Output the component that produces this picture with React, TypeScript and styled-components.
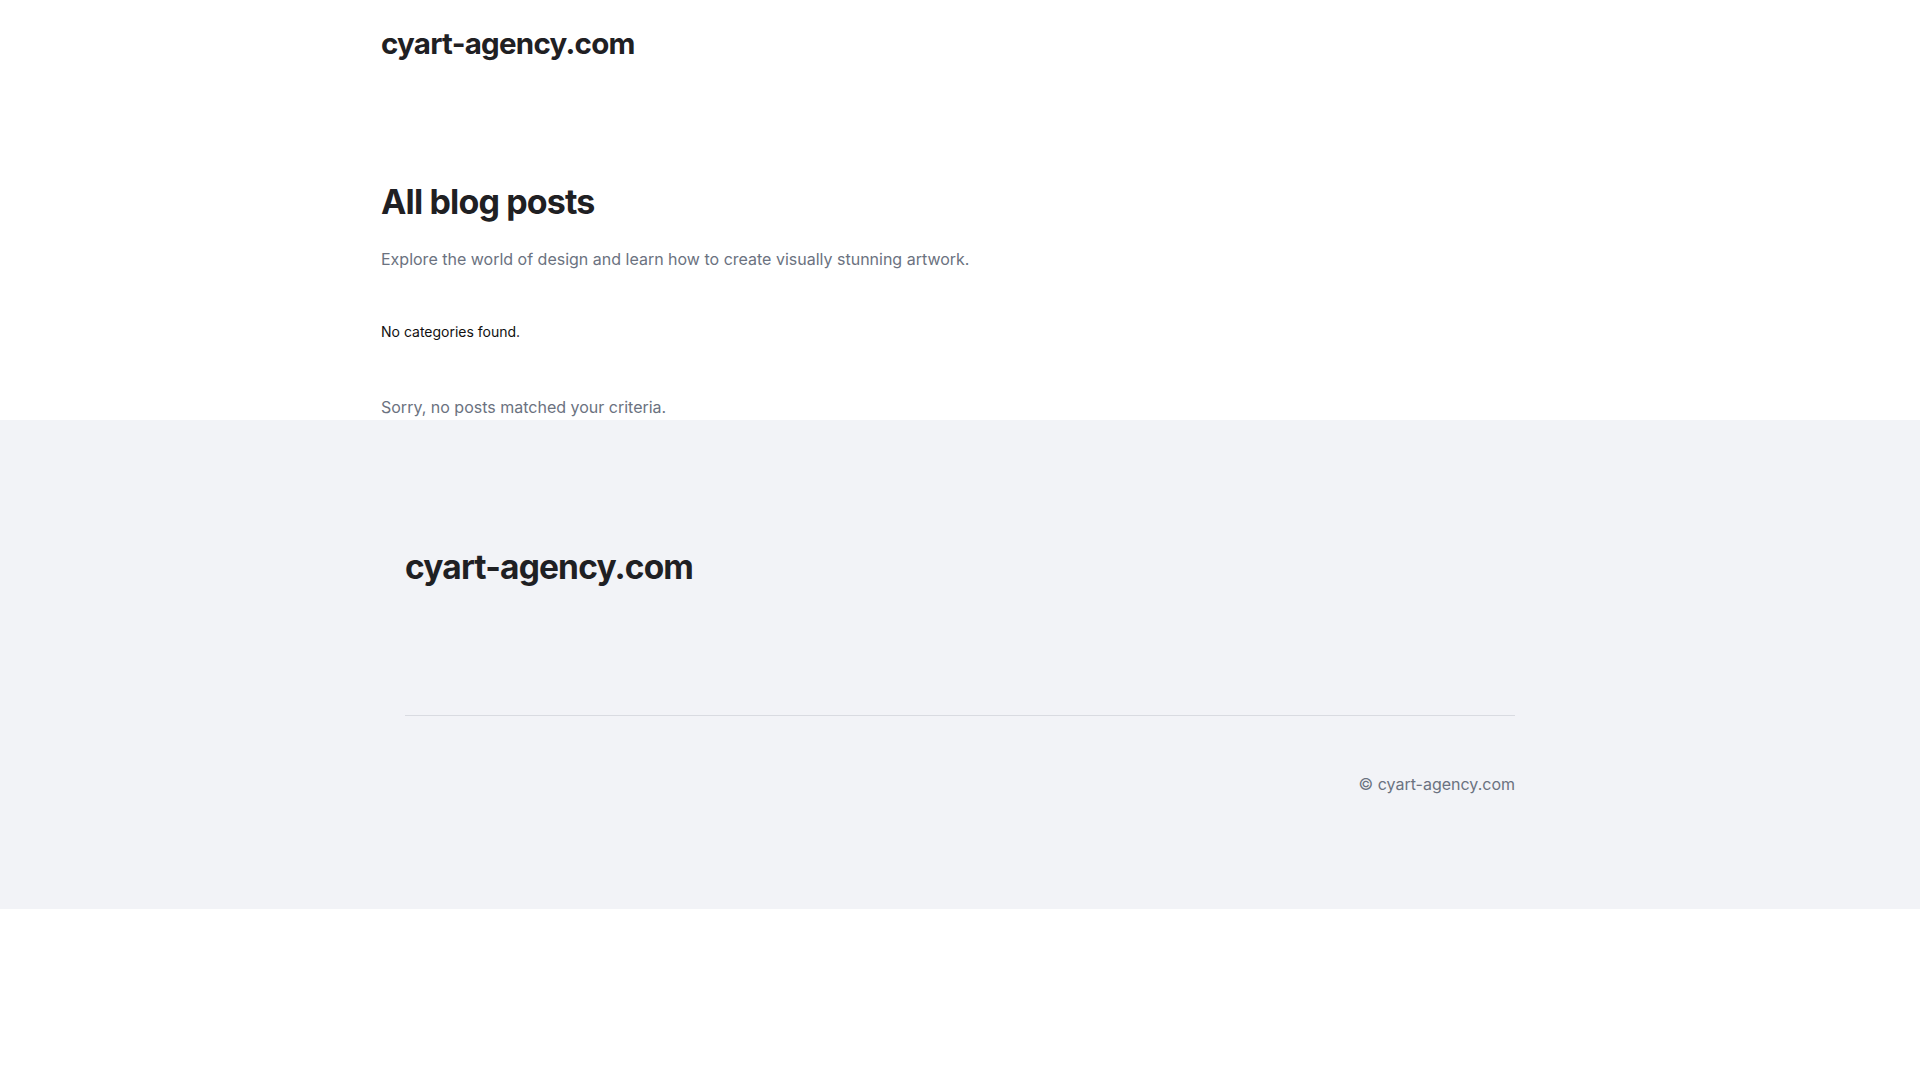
import React from "react";
import styled, { createGlobalStyle } from "styled-components";

const GlobalStyle = createGlobalStyle`
  * {
    box-sizing: border-box;
  }
  html, body {
    margin: 0;
    padding: 0;
    background: #ffffff;
    font-family: Inter, "Noto Sans", "Liberation Sans", sans-serif;
    color: #1f2023;
  }
  h1, h2, p {
    margin: 0;
  }
`;

export default function App() {
  return (
    <>
      <GlobalStyle />
      <Header>
        <SiteTitle href="#">cyart-agency.com</SiteTitle>
      </Header>
      <Main>
        <PageTitle>All blog posts</PageTitle>
        <Lead>
          Explore the world of design and learn how to create visually stunning
          artwork.
        </Lead>
        <Categories>No categories found.</Categories>
        <EmptyNote>Sorry, no posts matched your criteria.</EmptyNote>
      </Main>
      <Footer>
        <FooterInner>
          <FooterTitle>cyart-agency.com</FooterTitle>
          <Divider />
          <Copyright>© cyart-agency.com</Copyright>
        </FooterInner>
      </Footer>
    </>
  );
}

const Header = styled.header`
  max-width: 1158px;
  margin: 0 auto;
  height: 86px;
  display: flex;
  align-items: center;
`;

const SiteTitle = styled.a`
  font-size: 29.5px;
  font-weight: 700;
  letter-spacing: -0.025em;
  color: #1f2023;
  text-decoration: none;
`;

const Main = styled.main`
  max-width: 1158px;
  margin: 0 auto;
  padding-top: 94px;
  display: flex;
  flex-direction: column;
`;

const PageTitle = styled.h1`
  font-size: 34px;
  line-height: 44px;
  font-weight: 700;
  letter-spacing: -0.025em;
  color: #1f2023;
`;

const Lead = styled.p`
  margin-top: 23px;
  font-size: 16px;
  line-height: 24px;
  color: #6b7280;
`;

const Categories = styled.p`
  margin-top: 51px;
  font-size: 14px;
  line-height: 20px;
  color: #111111;
`;

const EmptyNote = styled.p`
  margin-top: 53px;
  font-size: 16px;
  line-height: 24px;
  color: #6b7280;
`;

const Footer = styled.footer`
  margin-top: 1px;
  background: #f2f3f7;
  height: 489px;
`;

const FooterInner = styled.div`
  max-width: 1110px;
  margin: 0 auto;
  padding-top: 125px;
  display: flex;
  flex-direction: column;
`;

const FooterTitle = styled.h2`
  font-size: 33.5px;
  line-height: 44px;
  font-weight: 700;
  letter-spacing: -0.025em;
  color: #1f2023;
`;

const Divider = styled.hr`
  margin: 126px 0 0;
  border: none;
  border-top: 1px solid #d9dbe1;
`;

const Copyright = styled.p`
  margin-top: 56px;
  align-self: flex-end;
  font-size: 16px;
  line-height: 24px;
  color: #6b7280;
`;
